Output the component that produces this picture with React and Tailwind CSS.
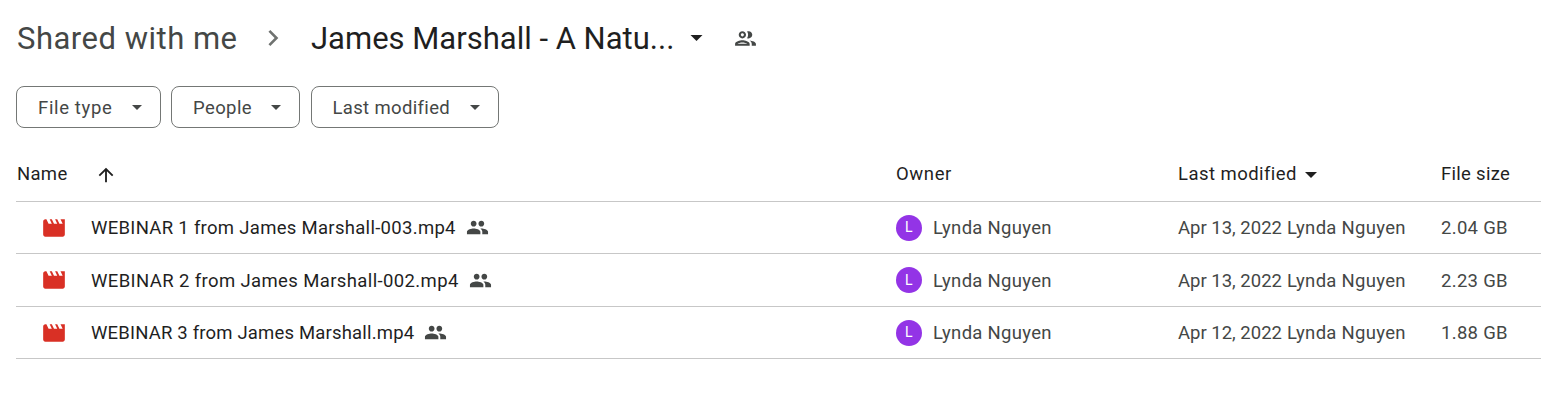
const PEOPLE = "M16 11c1.66 0 2.99-1.34 2.99-3S17.66 5 16 5c-1.66 0-3 1.34-3 3s1.34 3 3 3zm-8 0c1.66 0 2.99-1.34 2.99-3S9.66 5 8 5C6.34 5 5 6.34 5 8s1.34 3 3 3zm0 2c-2.33 0-7 1.17-7 3.5V19h14v-2.5c0-2.33-4.67-3.5-7-3.5zm8 0c-.29 0-.62.02-.97.05 1.16.84 1.97 1.97 1.97 3.45V19h6v-2.5c0-2.33-4.67-3.5-7-3.5z";
const OUTLINE = "M9 13.75c-2.34 0-7 1.17-7 3.5V19h14v-1.75c0-2.33-4.66-3.5-7-3.5zM4.34 17c.84-.58 2.87-1.25 4.66-1.25s3.82.67 4.66 1.25H4.34zM9 12c1.93 0 3.5-1.57 3.5-3.5S10.93 5 9 5 5.5 6.57 5.5 8.5 7.07 12 9 12zm0-5c.83 0 1.5.67 1.5 1.5S9.83 10 9 10s-1.5-.67-1.5-1.5S8.17 7 9 7zm7.04 6.81c1.16.84 1.96 1.96 1.96 3.44V19h4v-1.75c0-2.02-3.5-3.17-5.96-3.44zM15 12c1.93 0 3.5-1.57 3.5-3.5S16.93 5 15 5c-.54 0-1.04.13-1.5.35.63.89 1 1.98 1 3.15s-.37 2.26-1 3.15c.46.22.96.35 1.5.35z";
const MOVIE = "M18 4l2 4h-3l-2-4h-2l2 4h-3l-2-4H8l2 4H7L5 4H4c-1.1 0-1.99.9-1.99 2L2 18c0 1.1.9 2 2 2h16c1.1 0 2-.9 2-2V4h-4z";

function Icon({ d, className }) {
  return (
    <svg viewBox="0 0 24 24" className={className} fill="currentColor">
      <path d={d} />
    </svg>
  );
}

function Caret({ className }) {
  return (
    <svg viewBox="0 0 10 5" className={className} fill="currentColor">
      <path d="M0 0h10L5 5z" />
    </svg>
  );
}

function Chip({ label, width, tracking }) {
  return (
    <div className={`flex h-[42px] items-center justify-between rounded-lg border border-[#747775] pl-[21px] pr-[18px] text-[#444746] ${width}`}>
      <span className={`pt-[2px] text-[18.5px] leading-none ${tracking}`}>{label}</span>
      <Caret className="h-[5px] w-[10px]" />
    </div>
  );
}

const rows = [
  { name: "WEBINAR 1 from James Marshall-003.mp4", date: "Apr 13, 2022", size: "2.04 GB", h: "h-[52px]", t: "tracking-[0.3px]" },
  { name: "WEBINAR 2 from James Marshall-002.mp4", date: "Apr 13, 2022", size: "2.23 GB", h: "h-[53px]", t: "tracking-[0.38px]" },
  { name: "WEBINAR 3 from James Marshall.mp4", date: "Apr 12, 2022", size: "1.88 GB", h: "h-[52px]", t: "tracking-[0.18px]" },
];

const GRID = "grid grid-cols-[880px_282px_263px_1fr] items-center border-b border-[#c7c7c7] text-[18.5px] tracking-[0.3px]";

export default function App() {
  return (
    <div className="h-[420px] w-[1541px] overflow-hidden bg-white pl-4 font-['Roboto',sans-serif] text-[#1f1f1f]">
      <div className="flex h-[86px] items-center pb-[10px]">
        <span className="w-[241px] pl-px text-[31px] leading-none tracking-[0.5px] text-[#444746]">Shared with me</span>
        <svg viewBox="0 0 24 24" className="h-8 w-8 text-[#6f7270]" fill="currentColor">
          <path d="M10 6 8.6 7.4 13.2 12l-4.6 4.6L10 18l6-6z" />
        </svg>
        <span className="ml-[22px] text-[31px] leading-none">James Marshall - A Natu...</span>
        <Caret className="ml-[16px] h-[6px] w-[13px]" />
        <Icon d={OUTLINE} className="ml-[30px] h-[25px] w-[25px] text-[#444746]" />
      </div>

      <div className="flex gap-[10.5px]">
        <Chip label="File type" width="w-[144.5px]" tracking="tracking-[0.65px]" />
        <Chip label="People" width="w-[129px]" tracking="tracking-[0.4px]" />
        <Chip label="Last modified" width="w-[188px]" tracking="tracking-[0.35px]" />
      </div>

      <div className={`${GRID} h-[74px] pt-[21px]`}>
        <div className="flex items-center pl-[1px]">
          <span className="w-[78px]">Name</span>
          <svg viewBox="0 0 24 24" className="h-[22px] w-[22px]" fill="currentColor">
            <path d="M4 12l1.41 1.41L11 7.83V20h2V7.83l5.58 5.59L20 12l-8-8-8 8z" />
          </svg>
        </div>
        <span className="tracking-[0.6px]">Owner</span>
        <div className="flex items-center">
          <span className="tracking-[0.45px]">Last modified</span>
          <Caret className="ml-[8px] h-[6px] w-[12px]" />
        </div>
        <span>File size</span>
      </div>

      {rows.map((r) => (
        <div key={r.name} className={`${GRID} ${r.h}`}>
          <div className="flex items-center">
            <Icon d={MOVIE} className="ml-[25px] h-[26px] w-[26px] text-[#d93025]" />
            <span className={`ml-[24px] pt-[3px] text-[#1f1f1f] ${r.t}`}>{r.name}</span>
            <Icon d={PEOPLE} className="ml-[10px] h-[23px] w-[23px] text-[#444746]" />
          </div>
          <div className="flex items-center text-[#444746]">
            <span className="flex h-[26px] w-[26px] items-center justify-center rounded-full bg-[#9334e6] text-[14px] text-white">L</span>
            <span className="ml-[11px] pt-[3px]">Lynda Nguyen</span>
          </div>
          <div className="flex items-center pt-[3px] text-[#444746]">
            <span className="w-[109px] tracking-normal">{r.date}</span>
            <span>Lynda Nguyen</span>
          </div>
          <span className="pt-[3px] text-[#444746]">{r.size}</span>
        </div>
      ))}
    </div>
  );
}
